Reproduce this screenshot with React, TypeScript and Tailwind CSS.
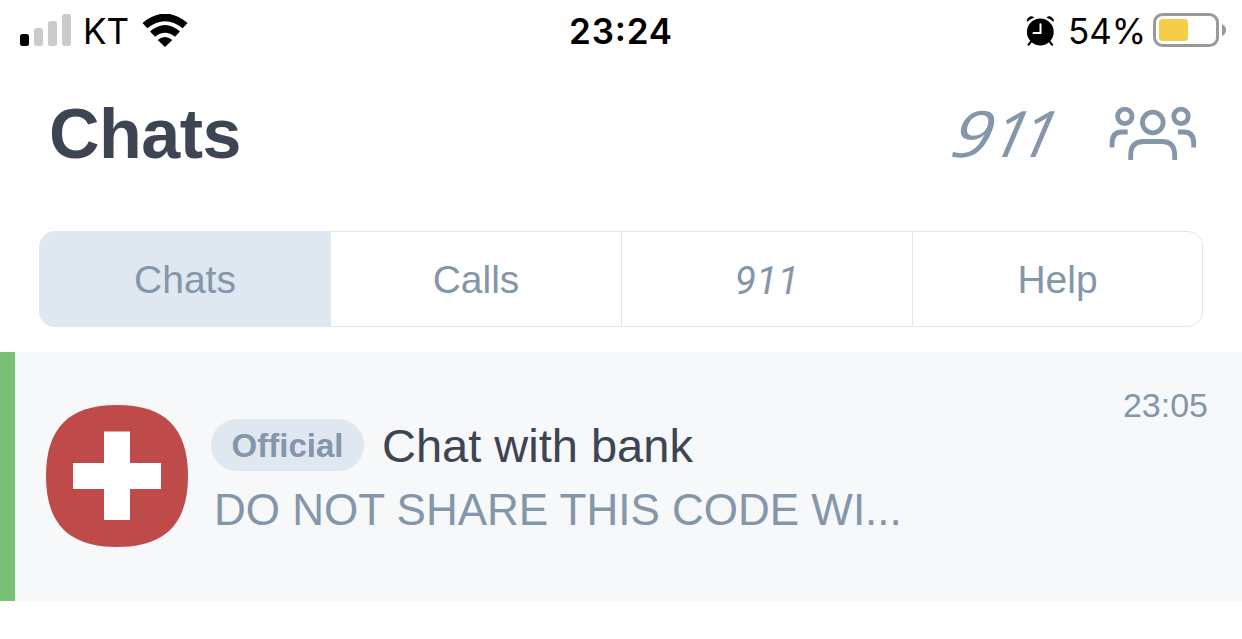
import clsx from 'clsx';

const tabs = [
  { label: 'Chats', active: true },
  { label: 'Calls' },
  { label: '911', italic: true },
  { label: 'Help' },
];

function SignalIcon() {
  return (
    <svg width="51" height="32" viewBox="0 0 51 32" fill="#cbcbcb">
      <rect x="0" y="20" width="9" height="12" rx="2.5" fill="#000" />
      <rect x="14" y="14" width="9" height="18" rx="2.5" />
      <rect x="28" y="7" width="9" height="25" rx="2.5" />
      <rect x="42" y="0" width="9" height="32" rx="2.5" />
    </svg>
  );
}

function WifiIcon() {
  return (
    <svg width="46" height="33" viewBox="0 0 46 33">
      <path d="M0.5 9 Q23 -9.8 45.5 9 L40.7 14.2 Q23 0.2 5.3 14.2 Z" />
      <path d="M8 17.6 Q23 4.4 38 17.6 L33 22.8 Q23 14.6 13 22.8 Z" />
      <path d="M15.7 26 Q23 20 30.3 26 L23 33 Z" />
    </svg>
  );
}

function AlarmIcon() {
  return (
    <svg width="28" height="30" viewBox="0 0 28 30">
      <circle cx="14.3" cy="16" r="13.4" />
      <path d="M1.2 5.4 Q0.6 3.2 2.8 1.5 Q5.4 -0.4 7.8 1.4 Q3.6 3 1.2 5.4 Z M27.4 5.4 Q28 3.2 25.8 1.5 Q23.2 -0.4 20.8 1.4 Q25 3 27.4 5.4 Z" stroke="#000" strokeWidth="0.6" />
      <path d="M5 25.6 L2.6 28.6 M23.6 25.6 L26 28.6" stroke="#000" strokeWidth="2.2" strokeLinecap="round" />
      <path d="M14.5 8.2 V17 H7.5" fill="none" stroke="#fff" strokeWidth="2" strokeLinecap="round" />
    </svg>
  );
}

function BatteryIcon() {
  return (
    <svg width="74" height="34" viewBox="0 0 74 34">
      <rect x="1.5" y="1.5" width="63" height="31" rx="8" fill="none" stroke="#999" strokeWidth="3" />
      <rect x="6" y="6" width="29" height="22" rx="3.5" fill="#f6cd46" />
      <path d="M69 11 Q73 13 73 17 Q73 21 69 23 Z" fill="#999" />
    </svg>
  );
}

function GroupIcon() {
  return (
    <svg width="88" height="54" viewBox="0 0 88 54" fill="none" stroke="#8496aa" strokeWidth="4.8">
      <circle cx="15.8" cy="9.4" r="7.2" />
      <circle cx="72" cy="9.4" r="7.2" />
      <circle cx="43.8" cy="15.5" r="10.3" />
      <path d="M3.1 40.5 V36 Q3.1 25 13 25 H18.7" />
      <path d="M84.7 40.5 V36 Q84.7 25 74.8 25 H68.9" />
      <path d="M21.7 53 V48 Q21.7 34.5 35 34.5 H52.5 Q65.7 34.5 65.7 48 V53" />
    </svg>
  );
}

function BankAvatar() {
  return (
    <svg width="142" height="142" viewBox="0 0 142 142">
      <path
        d="M71 0 C119 0 142 23 142 71 C142 119 119 142 71 142 C23 142 0 119 0 71 C0 23 23 0 71 0 Z"
        fill="#be4a49"
      />
      <path d="M58 26.5 H84 V58 H115 V84 H84 V115 H58 V84 H27 V58 H58 Z" fill="#fff" />
    </svg>
  );
}

function StatusBar() {
  return (
    <div className="flex h-[62px] items-center justify-between pr-[15px] pl-5 font-[Inter,sans-serif] text-[35px] leading-[62px] text-black">
      <div className="flex w-[400px] items-center">
        <div className="-mt-[2px]"><SignalIcon /></div>
        <span className="ml-3 w-[59px] whitespace-nowrap">KT</span>
        <div className="-mt-[2px]"><WifiIcon /></div>
      </div>
      <div className="mr-[5px] font-semibold tracking-[0.8px]">
        23<span className="inline-block -translate-y-[3px]">:</span>24
      </div>
      <div className="flex w-[400px] items-center justify-end">
        <AlarmIcon />
        <span className="ml-[14px] w-[85px] whitespace-nowrap">54%</span>
        <div className="-mt-[2px]"><BatteryIcon /></div>
      </div>
    </div>
  );
}

export default function App() {
  return (
    <div className="h-[639px] w-[1242px] overflow-hidden bg-white font-['Liberation_Sans',Arial,sans-serif] text-[#8496aa]">
      <StatusBar />

      <header className="flex h-[169px] items-start justify-between pt-[31px] pr-[45px] pl-[49px]">
        <h1 className="pt-px text-[70px] leading-[80px] font-bold tracking-[-0.5px] text-[#3d4553]">Chats</h1>
        <div className="flex items-start">
          <div className="mr-[57px] flex w-[107px] origin-bottom-left -skew-x-12 font-['Open_Sans',sans-serif] text-[64px] leading-[80px] whitespace-nowrap italic">
            <span className="mr-[5px] inline-block origin-left scale-x-[1.15]">9</span>
            <span className="tracking-[-7px]">11</span>
          </div>
          <div className="pt-[14px]"><GroupIcon /></div>
        </div>
      </header>

      <nav className="mx-[39px] flex h-24 w-[1164px] overflow-hidden rounded-[15px] border border-[#dfe7f0]">
        {tabs.map((tab) => (
          <button
            key={tab.label}
            className={clsx(
              'flex w-[291px] shrink-0 items-center justify-center border-r border-[#dfe7f0] text-[39px] leading-none last:w-[289px] last:border-r-0',
              tab.active && 'bg-[#dfe7f0]',
              tab.italic ? 'pt-[5px] font-[Roboto,sans-serif] tracking-[0.3px] italic' : 'pt-px',
            )}
          >
            {tab.label}
          </button>
        ))}
      </nav>

      <section className="mt-[25px] flex h-[249px] border-l-[15px] border-[#78c074] bg-[#f6f8fa] pr-[34px] pl-[31px]">
        <div className="mt-[53px] shrink-0"><BankAvatar /></div>
        <div className="ml-[23px] flex-1 pt-[66px]">
          <div className="flex items-center">
            <span className="flex h-[52px] w-[153px] items-center justify-center rounded-full bg-[#dfe7f0] text-[33px] leading-none font-bold">
              Official
            </span>
            <h2 className="ml-[18px] pt-[2px] text-[47px] leading-[52px] whitespace-nowrap text-[#3d4553]">Chat with bank</h2>
          </div>
          <p className="mt-[12px] ml-[3px] text-[44px] leading-[52px] whitespace-nowrap">DO NOT SHARE THIS CODE WI...</p>
        </div>
        <time className="pt-[33px] text-[34px] leading-10">23:05</time>
      </section>
    </div>
  );
}
